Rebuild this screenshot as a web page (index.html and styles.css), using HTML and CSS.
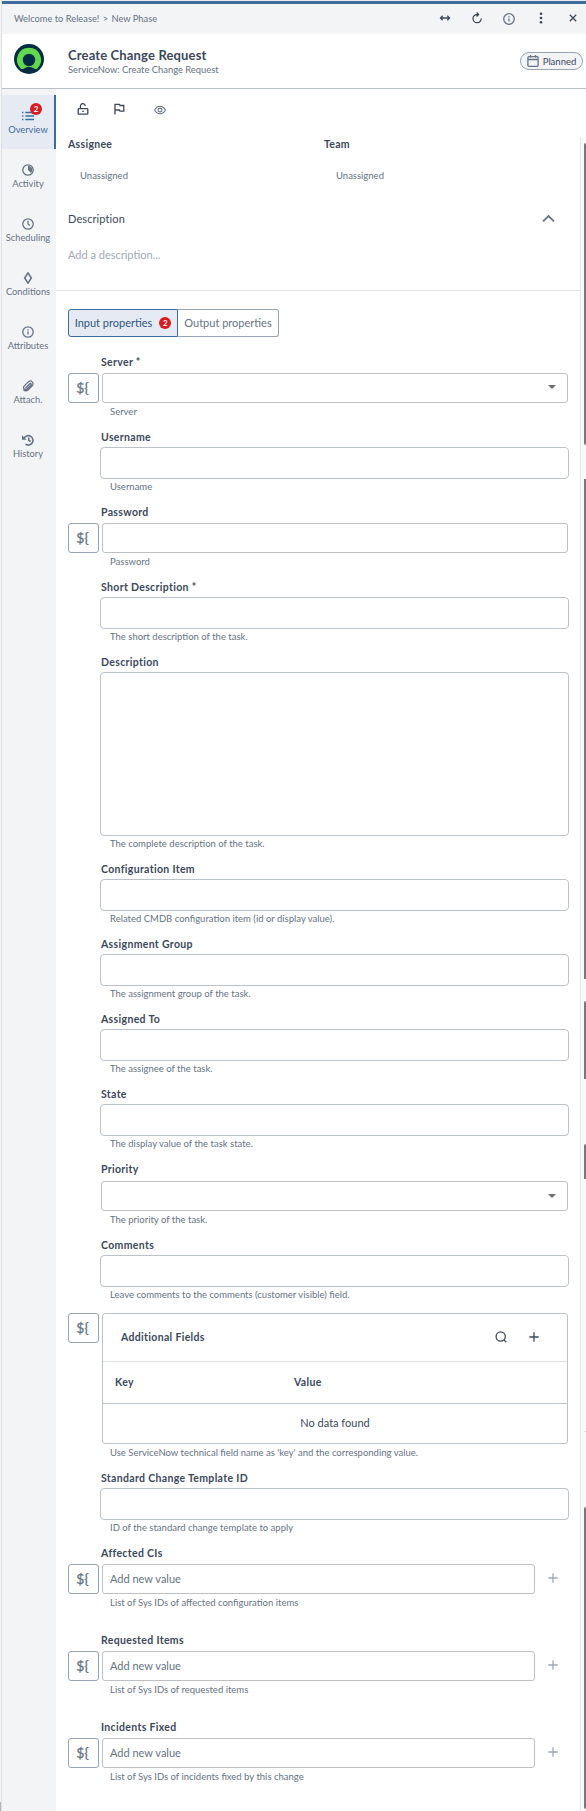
FILE: index.html
```html
<!DOCTYPE html>
<html lang="en">
<head>
  <meta charset="UTF-8">
  <title>Create Change Request</title>
  <link rel="stylesheet" href="styles.css">
</head>
<body>
  <div class="gutter"><div class="gutter-thumb"></div></div>

  <div class="drawer">
    <!-- Breadcrumb bar -->
    <div class="topbar">
      <span class="breadcrumb">Welcome to Release! <span class="sep">&gt;</span> New Phase</span>
      <div class="topbar-icons">
        <svg width="12" height="12" viewBox="0 0 12 12"><path d="M1.5 6h9M3.7 3.8L1.5 6l2.2 2.2M8.3 3.8L10.5 6 8.3 8.2"/></svg>
        <svg width="12" height="12" viewBox="0 0 12 12"><path d="M10.2 6.5A4.1 4.1 0 1 1 6 2.5h1.5M5.6 .5l2 2-2 2"/></svg>
        <svg class="muted info" width="12" height="12" viewBox="0 0 12 12"><circle cx="6" cy="6" r="5.3"/><path d="M6 5.4v3.2M6 3.2v1.2"/></svg>
        <svg class="solid" width="12" height="12" viewBox="0 0 12 12"><circle cx="6" cy="1.8" r="1.3"/><circle cx="6" cy="6" r="1.3"/><circle cx="6" cy="10.2" r="1.3"/></svg>
        <svg width="12" height="12" viewBox="0 0 12 12"><path d="M2.8 2.8l6.4 6.4M9.2 2.8L2.8 9.2"/></svg>
      </div>
    </div>

    <!-- Task title -->
    <div class="header">
      <svg class="logo" width="30" height="30" viewBox="0 0 30 30">
        <circle cx="15" cy="15" r="15" fill="#032d42"/>
        <path d="M15 3.8a12 12 0 0 0-8.4 20.6c.9.9 2.3.9 3.3.2a8.5 8.5 0 0 1 10.2 0c1 .7 2.4.7 3.3-.2A12 12 0 0 0 15 3.8z" fill="#62d84e"/>
        <circle cx="15" cy="16" r="6.2" fill="#032d42"/>
      </svg>
      <div class="titles">
        <h1>Create Change Request</h1>
        <p>ServiceNow: Create Change Request</p>
      </div>
      <span class="status">
        <svg width="12" height="12" viewBox="0 0 12 12"><rect x=".9" y="1.7" width="10.2" height="9.6" rx="1"/><path d="M1 4.5h10M3.5 0v2.5M8.5 0v2.5"/></svg>
        Planned
      </span>
    </div>

    <div class="main">
      <nav class="sidebar">
        <a class="nav-item active">
          <svg width="12" height="12" viewBox="0 0 12 12"><path d="M3.3 2.5H12M3.3 6H12M3.3 9.5H12M0 2.5h1.4M0 6h1.4M0 9.5h1.4"/></svg>
          <span class="badge nav-badge">2</span>
          Overview
        </a>
        <a class="nav-item">
          <svg width="12" height="12" viewBox="0 0 12 12"><circle cx="6" cy="6" r="5.2"/><path class="fill" d="M6 1.8a4.2 4.2 0 0 1 3 7.2L6 6z"/></svg>
          Activity
        </a>
        <a class="nav-item">
          <svg width="12" height="12" viewBox="0 0 12 12"><circle cx="6" cy="6" r="5.2"/><path d="M6 2.8V6l2 1.5"/></svg>
          Scheduling
        </a>
        <a class="nav-item">
          <svg width="12" height="12" viewBox="0 0 12 12"><path stroke-width="1.6" d="M6 .9L9.3 6 6 11.1 2.7 6z"/></svg>
          Conditions
        </a>
        <a class="nav-item">
          <svg width="12" height="12" viewBox="0 0 12 12"><circle cx="6" cy="6" r="5.2"/><path d="M6 5.3v3.2M6 3.2v1.2"/></svg>
          Attributes
        </a>
        <a class="nav-item">
          <svg width="12" height="12" viewBox="0 0 12 12"><path d="M3.3 8.3l4.5-4.5a.8.8 0 0 1 1.2 1.2L5 9a2 2 0 0 1-2.9-2.9L6.3 1.9a2.7 2.7 0 0 1 3.9 3.8L6 10a3 3 0 0 1-4.6-.4"/></svg>
          Attach.
        </a>
        <a class="nav-item">
          <svg width="12" height="12" viewBox="0 0 12 12"><path stroke-width="1.6" d="M2.2 4A4.7 4.7 0 1 1 3.5 10.2M6.7 3.5v2.8l2 1.2"/><path class="fill" d="M0 1.2v4.6h4.6z"/></svg>
          History
        </a>
      </nav>

      <div class="content">
        <div class="actions">
          <svg width="12" height="12" viewBox="0 0 12 12"><rect x="1.2" y="5.7" width="9.6" height="5.5" rx=".8"/><path d="M3.5 5.5V3.4a2.4 2.4 0 0 1 4.8-.6M5.2 8.4h1.6"/></svg>
          <svg width="12" height="12" viewBox="0 0 12 12"><path d="M2 11.5V1.3h4.5l.5 1.2h3.8v5.7H7L6.5 7H2"/></svg>
          <svg class="muted thin" width="12" height="12" viewBox="0 0 12 12"><path d="M.6 6C2 3.4 3.9 2.2 6 2.2S10 3.4 11.4 6C10 8.6 8.1 9.8 6 9.8S2 8.6.6 6z"/><circle cx="6" cy="6" r="1.9"/></svg>
        </div>

        <div class="scroll">
          <div class="body">
            <div class="people">
              <div><b>Assignee</b><span>Unassigned</span></div>
              <div><b>Team</b><span>Unassigned</span></div>
            </div>
            <div class="desc-head">
              Description
              <svg width="13" height="12" viewBox="0 0 13 12"><path d="M1 9.3L6.5 4 12 9.3"/></svg>
            </div>
            <p class="desc-empty">Add a description...</p>

            <div class="props">
              <div class="tabs">
                <button class="tab selected">Input properties <span class="badge">2</span></button>
                <button class="tab">Output properties</button>
              </div>

              <div class="field var">
                <label>Server *</label>
                <div class="row"><button class="var-btn">${</button><div class="box"><i class="caret"></i></div></div>
                <small>Server</small>
              </div>
              <div class="field">
                <label>Username</label>
                <div class="box"></div>
                <small>Username</small>
              </div>
              <div class="field var">
                <label>Password</label>
                <div class="row"><button class="var-btn">${</button><div class="box"></div></div>
                <small>Password</small>
              </div>
              <div class="field">
                <label>Short Description *</label>
                <div class="box"></div>
                <small>The short description of the task.</small>
              </div>
              <div class="field">
                <label>Description</label>
                <div class="box area"></div>
                <small>The complete description of the task.</small>
              </div>
              <div class="field">
                <label>Configuration Item</label>
                <div class="box"></div>
                <small>Related CMDB configuration item (id or display value).</small>
              </div>
              <div class="field">
                <label>Assignment Group</label>
                <div class="box"></div>
                <small>The assignment group of the task.</small>
              </div>
              <div class="field">
                <label>Assigned To</label>
                <div class="box"></div>
                <small>The assignee of the task.</small>
              </div>
              <div class="field">
                <label>State</label>
                <div class="box"></div>
                <small>The display value of the task state.</small>
              </div>
              <div class="field select">
                <label>Priority</label>
                <div class="box"><i class="caret"></i></div>
                <small>The priority of the task.</small>
              </div>
              <div class="field">
                <label>Comments</label>
                <div class="box"></div>
                <small>Leave comments to the comments (customer visible) field.</small>
              </div>

              <div class="field var table-field">
                <div class="row">
                  <button class="var-btn">${</button>
                  <div class="table">
                    <div class="table-title">
                      <span>Additional Fields</span>
                      <svg width="12" height="12" viewBox="0 0 12 12"><circle cx="5.7" cy="5.5" r="4.6"/><path d="M9 8.9l2.3 2.3"/></svg>
                      <svg width="12" height="12" viewBox="0 0 12 12"><path d="M6 1.3v9.4M1.3 6h9.4"/></svg>
                    </div>
                    <div class="table-head"><span>Key</span><span>Value</span></div>
                    <div class="table-empty">No data found</div>
                  </div>
                </div>
                <small>Use ServiceNow technical field name as 'key' and the corresponding value.</small>
              </div>

              <div class="field">
                <label>Standard Change Template ID</label>
                <div class="box"></div>
                <small>ID of the standard change template to apply</small>
              </div>

              <div class="field var list">
                <label>Affected CIs</label>
                <div class="row"><button class="var-btn">${</button><div class="box">Add new value</div><svg class="add" width="12" height="12" viewBox="0 0 12 12"><path d="M6 1.3v9.4M1.3 6h9.4"/></svg></div>
                <small>List of Sys IDs of affected configuration items</small>
              </div>
              <div class="field var list">
                <label>Requested Items</label>
                <div class="row"><button class="var-btn">${</button><div class="box">Add new value</div><svg class="add" width="12" height="12" viewBox="0 0 12 12"><path d="M6 1.3v9.4M1.3 6h9.4"/></svg></div>
                <small>List of Sys IDs of requested items</small>
              </div>
              <div class="field var list">
                <label>Incidents Fixed</label>
                <div class="row"><button class="var-btn">${</button><div class="box">Add new value</div><svg class="add" width="12" height="12" viewBox="0 0 12 12"><path d="M6 1.3v9.4M1.3 6h9.4"/></svg></div>
                <small>List of Sys IDs of incidents fixed by this change</small>
              </div>
            </div>
          </div>

          <div class="track">
            <div class="thumb t1"></div>
            <div class="thumb t2"></div>
            <div class="thumb t3"></div>
            <div class="thumb t4"></div>
            <div class="tick"></div>
            <div class="thumb t5"></div>
          </div>
        </div>
      </div>
    </div>
  </div>
</body>
</html>
```

FILE: styles.css
```css
* {
  box-sizing: border-box;
}
body {
  margin: 0;
  width: 586px;
  height: 1811px;
  display: flex;
  overflow: hidden;
  background: #fff;
  font-family: Lato, sans-serif;
  font-size: 10px;
  color: #3b485c;
}
h1, p {
  margin: 0;
}
svg {
  fill: none;
  stroke: #3b485c;
  stroke-width: 1.3;
  flex-shrink: 0;
}
svg.muted {
  stroke: #667385;
}
svg.thin {
  stroke-width: 1.1;
}
svg.solid {
  fill: #3b485c;
  stroke: none;
}
svg.logo {
  stroke: none;
}
button {
  font-family: inherit;
  background: #fff;
  padding: 0;
  margin: 0;
}
.gutter {
  width: 2px;
  background: #f3f4f6;
  border-right: 1px solid #dfe1e5;
  display: flex;
  flex-direction: column;
  justify-content: flex-end;
}
.gutter-thumb {
  height: 9px;
  background: #b5b6b8;
}
.drawer {
  width: 584px;
  padding-top: 1px;
  background: #eceef0;
  display: flex;
  flex-direction: column;
}

/* top */
.topbar {
  height: 33px;
  border-top: 3px solid #3d6c9e;
  background: #f3f4f6;
  display: flex;
  align-items: center;
  justify-content: space-between;
  padding: 0 7px 1px 12px;
}
.breadcrumb {
  font-size: 9.3px;
  color: #667385;
}
.sep {
  margin: 0 1px;
}
.topbar-icons {
  display: flex;
  gap: 20px;
}
.info {
  margin-top: 1px;
}
.header {
  height: 55px;
  background: #fff;
  border-bottom: 1px solid #b9bfc9;
  display: flex;
  padding: 10px 3px 0 12px;
}
.titles {
  margin-left: 24px;
  flex: 1;
}
h1 {
  font-size: 13px;
  line-height: 16px;
  letter-spacing: 0.15px;
  padding-top: 3px;
}
.titles p {
  font-size: 9.4px;
  line-height: 13px;
  color: #667385;
}
.status {
  height: 18px;
  width: 63px;
  margin-top: 8px;
  border: 1px solid #98a3b3;
  border-radius: 9px;
  background: #f3f4f6;
  display: flex;
  align-items: center;
  justify-content: center;
  gap: 4px;
  font-size: 9.5px;
}
.status svg {
  stroke: #667385;
}

/* sidebar */
.main {
  flex: 1;
  display: flex;
  background: #fff;
}
.sidebar {
  width: 54px;
  background: #f3f4f6;
  padding-top: 6px;
}
.nav-item {
  position: relative;
  height: 54px;
  display: flex;
  flex-direction: column;
  align-items: center;
  padding: 15px 2px 0 0;
  font-size: 9.3px;
  line-height: 16px;
  color: #667385;
}
.nav-item svg {
  stroke: #667385;
}
.nav-item .fill {
  fill: #667385;
  stroke: none;
}
.nav-item.active {
  background: #e6ebf3;
  color: #3d6c9e;
  box-shadow: inset -2px 0 #3d6c9e;
}
.nav-item.active svg {
  stroke: #3d6c9e;
}
.badge {
  width: 12px;
  height: 12px;
  border-radius: 50%;
  background: #d91c22;
  color: #fff;
  font-size: 8px;
  font-weight: bold;
  line-height: 12px;
  text-align: center;
}
.nav-badge {
  position: absolute;
  left: 28px;
  top: 8px;
}

/* content */
.content {
  flex: 1;
  display: flex;
  flex-direction: column;
}
.actions {
  height: 48px;
  display: flex;
  padding: 14px 0 0 21px;
}
.actions svg {
  margin-right: 24px;
}
.actions svg + svg {
  margin-right: 29px;
}
.actions .thin {
  margin-top: 1px;
}
.scroll {
  flex: 1;
  display: flex;
}
.body {
  width: 524px;
}
.people {
  display: flex;
  padding-left: 12px;
}
.people div {
  width: 256px;
}
.people b, .people span {
  display: block;
  line-height: 14px;
}
.people b {
  font-size: 10.5px;
  letter-spacing: 0.3px;
}
.people span {
  margin: 18px 0 0 12px;
  font-size: 9.5px;
  color: #667385;
}
.desc-head {
  display: flex;
  justify-content: space-between;
  align-items: center;
  height: 20px;
  margin-top: 25px;
  padding: 0 25px 0 12px;
  font-size: 11px;
  letter-spacing: 0.1px;
}
.desc-head svg {
  stroke: #667385;
  stroke-width: 1.8;
}
.desc-empty {
  height: 63px;
  padding: 20px 12px 0;
  border-bottom: 1px solid #e3e5e8;
  line-height: 14px;
  font-size: 11px;
  color: #a2a9b4;
}
.props {
  padding: 18px 0 0 12px;
}
.tabs {
  display: flex;
  height: 28px;
  margin-bottom: 16px;
}
.tab {
  border: 1px solid #98a3b3;
  border-left: 0;
  border-radius: 0 3px 3px 0;
  width: 101px;
  padding-bottom: 2px;
  font-size: 11px;
  color: #667385;
  display: flex;
  align-items: center;
  justify-content: center;
  white-space: nowrap;
}
.tab.selected {
  width: 110px;
  border: 1px solid #3d6c9e;
  border-radius: 3px 0 0 3px;
  background: #e6ebf3;
  color: #2f5582;
  gap: 7px;
}
.tab .badge {
  margin-top: 1px;
}

/* fields */
.field {
  padding-left: 32px;
  width: 501px;
  margin-bottom: 8px;
}
.field label {
  display: block;
  height: 19px;
  line-height: 19px;
  padding-left: 1px;
  font-size: 10.5px;
  font-weight: bold;
  letter-spacing: 0.33px;
}
.field small {
  display: block;
  height: 16px;
  line-height: 16px;
  padding-left: 10px;
  font-size: 9.5px;
  color: #667385;
}
.box {
  height: 32px;
  border: 1px solid #bcc2cb;
  border-radius: 4px;
  background: #fff;
}
.area {
  height: 164px;
}
.field.var {
  padding-left: 0;
  width: 500px;
}
.field.var label {
  padding-left: 33px;
}
.field.var small {
  padding-left: 42px;
  margin-top: 1px;
}
.row {
  display: flex;
  margin-top: 1px;
}
.var .box, .select .box {
  height: 30px;
  border-radius: 3px;
  border-color: #bfc0c3;
  display: flex;
  align-items: center;
}
.var .box {
  flex: 1;
  padding: 0 0 2px 7px;
  font-size: 11px;
  color: #667385;
}
.var-btn {
  width: 31px;
  height: 30px;
  margin-right: 3px;
  padding: 0 2px 2px 0;
  border: 1px solid #98a3b3;
  border-radius: 3px;
  font-size: 14px;
  color: #667385;
  -webkit-text-stroke: 0.3px #667385;
}
.select .box {
  margin: 2px 1px 1px 1px;
}
.caret {
  margin: 0 11px 0 auto;
  border: 4px solid transparent;
  border-top-color: #6d6e70;
  border-bottom: 0;
}
.table-field {
  padding-top: 1px;
}
.table {
  flex: 1;
  height: 131px;
  border: 1px solid #bcc2cb;
  border-radius: 3px;
}
.table-title {
  height: 48px;
  border-bottom: 1px solid #dfe2e6;
  display: flex;
  align-items: center;
  padding: 0 27px 2px 18px;
  gap: 21px;
  font-size: 10.5px;
  font-weight: bold;
  letter-spacing: 0.33px;
}
.table-title span {
  flex: 1;
}
.table-head {
  height: 42px;
  border-bottom: 1px solid #bcc2cb;
  display: grid;
  grid-template-columns: 179px 1fr;
  align-items: center;
  padding: 0 0 1px 12px;
  font-size: 10.5px;
  font-weight: bold;
  letter-spacing: 0.33px;
}
.table-empty {
  height: 39px;
  line-height: 38px;
  text-align: center;
  font-size: 11px;
}
.list {
  margin-bottom: 20px;
}
.add {
  margin: 8px 9px 0 12px;
  stroke: #a2a9b4;
}

/* scrollbar strip */
.track {
  width: 6px;
  border-left: 1px solid #e3e4e6;
  background: #fafafa;
  display: flex;
  flex-direction: column;
  align-items: flex-end;
}
.thumb {
  width: 2px;
  background: #77787a;
  border-top-left-radius: 2px;
}
.t1 {
  margin-top: 6px;
  height: 302px;
  border-bottom-left-radius: 2px;
}
.t2 {
  margin-top: 34px;
  height: 500px;
  border-top-left-radius: 0;
}
.t3 {
  margin-top: 22px;
  height: 78px;
}
.t4 {
  margin-top: 65px;
  height: 35px;
}
.tick {
  margin-top: 252px;
  width: 1px;
  height: 1px;
  background: #b9bfc9;
}
.t5 {
  margin-top: 75px;
  height: 302px;
  border-bottom-left-radius: 2px;
}
```
